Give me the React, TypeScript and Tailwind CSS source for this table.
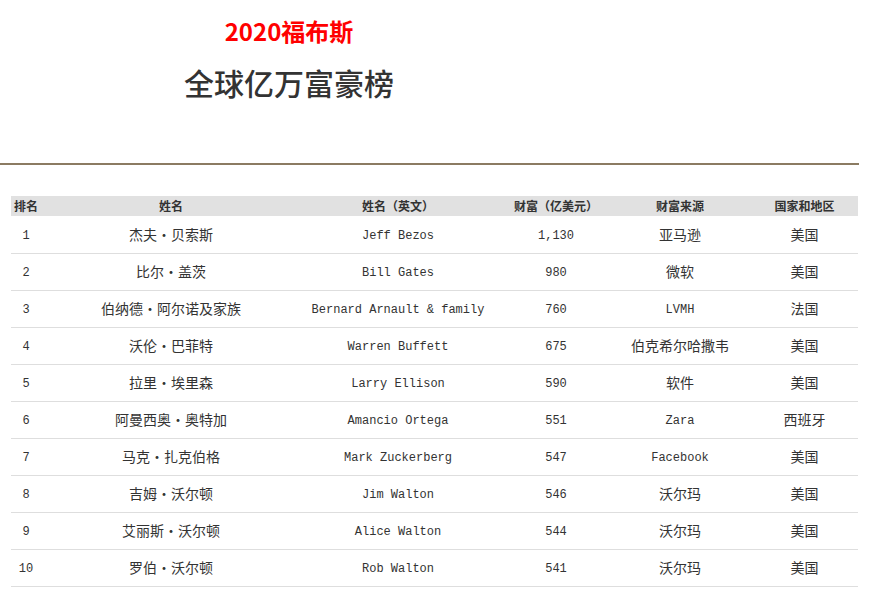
type Row = {
  rank: number;
  name: string;
  nameEn: string;
  wealth: string;
  source: string;
  country: string;
};

const rows: Row[] = [
  { rank: 1, name: '杰夫·贝索斯', nameEn: 'Jeff Bezos', wealth: '1,130', source: '亚马逊', country: '美国' },
  { rank: 2, name: '比尔·盖茨', nameEn: 'Bill Gates', wealth: '980', source: '微软', country: '美国' },
  { rank: 3, name: '伯纳德·阿尔诺及家族', nameEn: 'Bernard Arnault & family', wealth: '760', source: 'LVMH', country: '法国' },
  { rank: 4, name: '沃伦·巴菲特', nameEn: 'Warren Buffett', wealth: '675', source: '伯克希尔哈撒韦', country: '美国' },
  { rank: 5, name: '拉里·埃里森', nameEn: 'Larry Ellison', wealth: '590', source: '软件', country: '美国' },
  { rank: 6, name: '阿曼西奥·奥特加', nameEn: 'Amancio Ortega', wealth: '551', source: 'Zara', country: '西班牙' },
  { rank: 7, name: '马克·扎克伯格', nameEn: 'Mark Zuckerberg', wealth: '547', source: 'Facebook', country: '美国' },
  { rank: 8, name: '吉姆·沃尔顿', nameEn: 'Jim Walton', wealth: '546', source: '沃尔玛', country: '美国' },
  { rank: 9, name: '艾丽斯·沃尔顿', nameEn: 'Alice Walton', wealth: '544', source: '沃尔玛', country: '美国' },
  { rank: 10, name: '罗伯·沃尔顿', nameEn: 'Rob Walton', wealth: '541', source: '沃尔玛', country: '美国' },
];

const cjk = "font-['Noto_Sans_CJK_SC',sans-serif]";
// latin cells sit a touch high next to the CJK ones, nudge them down
const mono = "font-['Liberation_Mono','Noto_Sans_CJK_SC',monospace] pt-[3px]";

// source column mixes chinese and latin brand names
function isLatin(s: string) {
  return /^[A-Za-z0-9 ,&]+$/.test(s);
}

export default function App() {
  return (
    <div className={`w-[882px] h-[591px] bg-white overflow-hidden text-[#333] ${cjk}`}>
      {/* Title block */}
      <div className="h-[163px] w-[578px] pt-[16px] text-center">
        <div className="text-[24px] leading-[30px] font-bold text-[#f00]">2020福布斯</div>
        <div className="mt-[18px] text-[30px] leading-[36px] font-medium text-[#333]">全球亿万富豪榜</div>
      </div>
      <div className="h-[2px] w-[859px] bg-[#8b7b62]" />

      {/* Ranking table */}
      <table className="mt-[31px] ml-[11px] w-[847px] table-fixed border-collapse">
        <colgroup>
          <col className="w-[30px]" />
          <col className="w-[260px]" />
          <col className="w-[194px]" />
          <col className="w-[122px]" />
          <col className="w-[126px]" />
          <col className="w-[115px]" />
        </colgroup>
        <thead>
          <tr className="h-[20px] bg-[#e1e1e1] text-[12px] font-bold text-[#333]">
            <th className="p-0 text-left pl-[3px]">排名</th>
            <th className="p-0">姓名</th>
            <th className="p-0">姓名（英文）</th>
            <th className="p-0">财富（亿美元）</th>
            <th className="p-0">财富来源</th>
            <th className="p-0 pl-[8px]">国家和地区</th>
          </tr>
        </thead>
        <tbody>
          {rows.map((r) => (
            <tr key={r.rank} className="h-[37px] border-b border-[#dedede] text-center">
              <td className={`p-0 text-[12px] ${mono}`}>{r.rank}</td>
              <td className="p-0 text-[14px]">{r.name}</td>
              <td className={`p-0 text-[12px] ${mono}`}>{r.nameEn}</td>
              <td className={`p-0 text-[12px] ${mono}`}>{r.wealth}</td>
              <td className={`p-0 ${isLatin(r.source) ? `text-[12px] ${mono}` : 'text-[14px]'}`}>{r.source}</td>
              <td className="p-0 pl-[8px] text-[14px]">{r.country}</td>
            </tr>
          ))}
        </tbody>
      </table>
    </div>
  );
}
